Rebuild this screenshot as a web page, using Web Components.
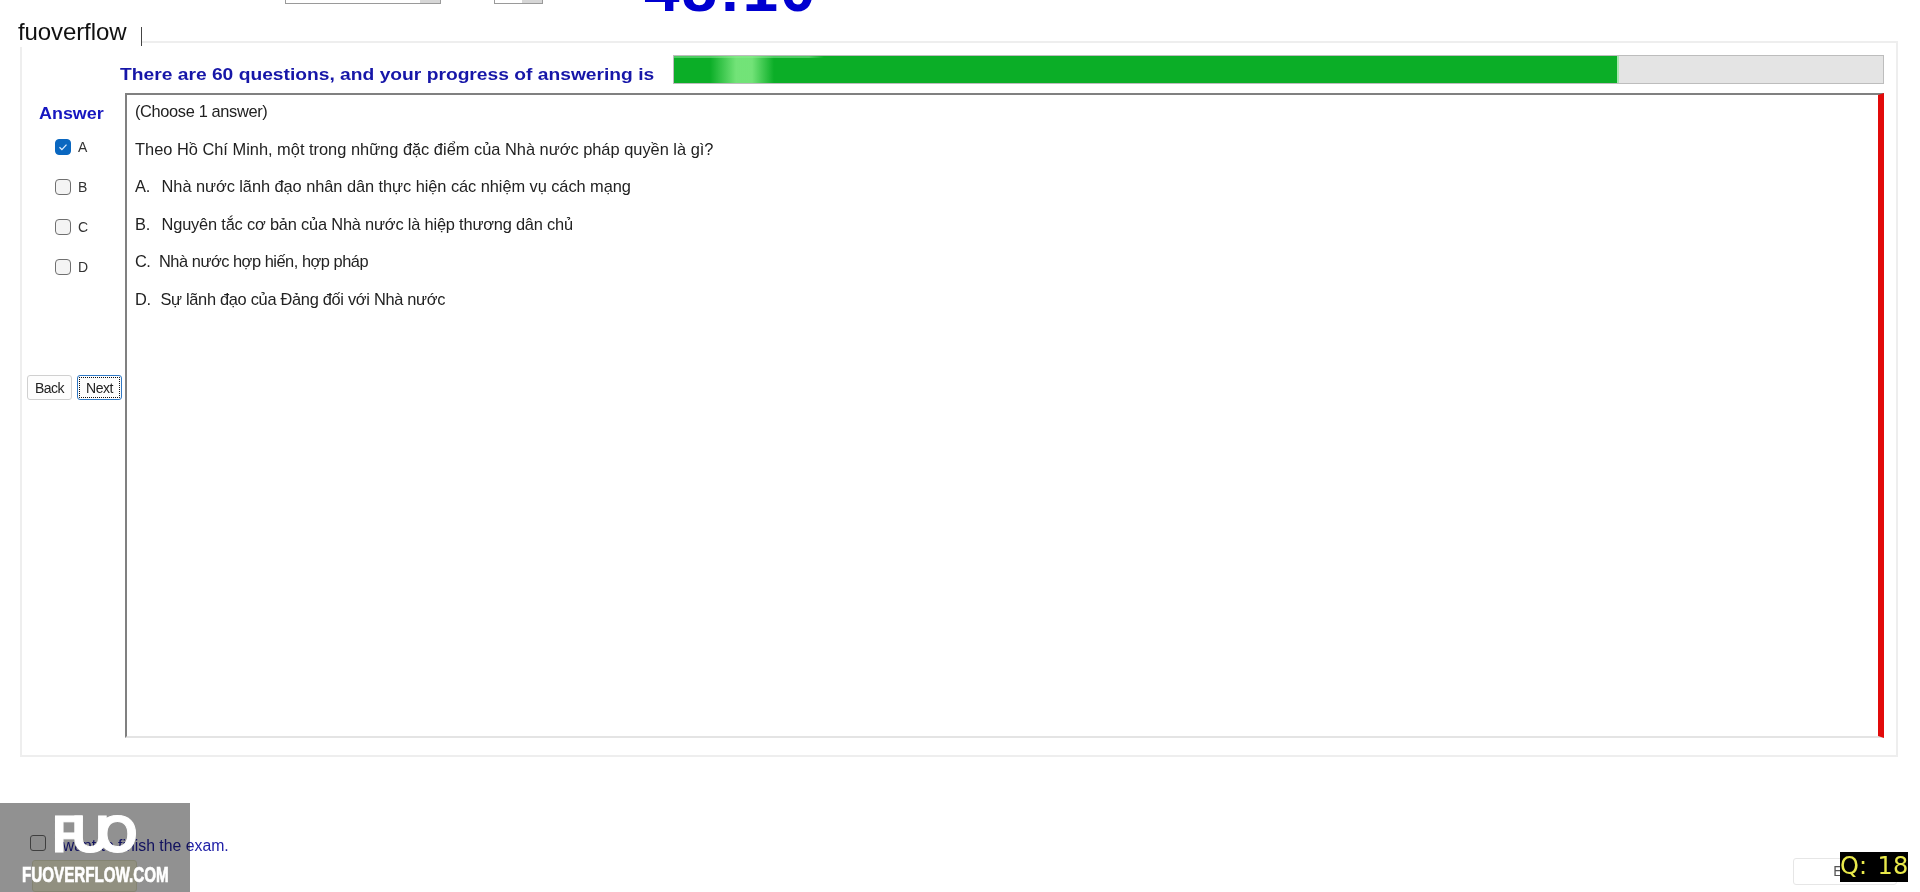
<!DOCTYPE html>
<html>
<head>
<meta charset="utf-8">
<title>Exam</title>
<style>
  html,body{margin:0;padding:0;background:#fff;height:100%;overflow:hidden;}
  body{font-family:"Liberation Sans",Arial,sans-serif;}
</style>
</head>
<body>
<exam-app></exam-app>
<script>
class examApp extends HTMLElement{
  constructor(){
    super();
    this.shadow=this.attachShadow({mode:'open'});
    this.shadow.innerHTML=`
    <style>
      /* the reference is a soft, rescaled capture */
      :host{display:flex;flex-direction:column;position:relative;width:1920px;height:892px;overflow:hidden;filter:blur(.35px);}
    </style>
    <exam-header></exam-header>
    <exam-frame></exam-frame>
    <exam-footer></exam-footer>
    <fuo-label></fuo-label>
    <fuo-watermark></fuo-watermark>
    <q-badge></q-badge>
    `;
  }
}
class examHeader extends HTMLElement{
  constructor(){
    super();
    this.shadow=this.attachShadow({mode:'open'});
    this.shadow.innerHTML=`
    <style>
      :host{display:flex;height:41px;flex:none;padding-left:285px;box-sizing:border-box;overflow:hidden;}
      .spin{height:24px;margin-top:-20px;box-sizing:border-box;border:1px solid #9a9a9a;background:#fff;display:flex;justify-content:flex-end;}
      .spin i{display:block;width:20px;background:#d6d6d6;}
      .a{width:156px;margin-right:53px;}
      .b{width:49px;margin-right:101px;}
      .clock{height:14px;margin-top:-18px;display:flex;align-items:flex-end;font:bold 64px/14px "Liberation Sans",Arial,sans-serif;color:#0000d0;letter-spacing:2px;}
    </style>
    <div class="spin a"><i></i></div>
    <div class="spin b"><i></i></div>
    <div class="clock"><span>48:10</span></div>
    `;
  }
}
class examFrame extends HTMLElement{
  constructor(){
    super();
    this.shadow=this.attachShadow({mode:'open'});
    this.shadow.innerHTML=`
    <style>
      :host{display:flex;flex-direction:column;flex:none;box-sizing:border-box;width:1878px;height:716px;margin-left:20px;border:2px solid #eee;padding:12px 12px 17px 0;}
      .main{display:flex;flex:1;min-height:0;margin-top:9px;}
    </style>
    <exam-progress total="60" percent="78"></exam-progress>
    <div class="main">
      <answer-panel></answer-panel>
      <question-box></question-box>
    </div>
    `;
  }
}
class examProgress extends HTMLElement{
  constructor(){
    super();
    this.shadow=this.attachShadow({mode:'open'});
    const total=this.getAttribute('total');
    const percent=this.getAttribute('percent');
    this.shadow.innerHTML=`
    <style>
      :host{display:flex;align-items:flex-start;height:29px;flex:none;padding-left:98px;}
      .cell{width:553px;flex:none;height:29px;}
      .txt{display:inline-block;font:bold 17px/39px "Liberation Sans",Arial,sans-serif;color:#1616a8;white-space:nowrap;transform:scaleX(1.131);transform-origin:0 0;}
      .bar{flex:1;height:29px;box-sizing:border-box;border:1px solid #bdbdbd;background:#e4e4e4;}
      .fill{height:100%;width:${percent}%;border-right:2px solid #a8e6b0;
        background:
          linear-gradient(90deg,transparent 36px,rgba(140,240,140,.8) 62px,rgba(140,240,140,.8) 78px,transparent 100px) 0 0/100% 100% no-repeat,
          linear-gradient(90deg,rgba(160,240,170,.45) 0,rgba(160,240,170,.45) 135px,transparent 150px) 0 0/100% 2px no-repeat,
          #0bae27;}
    </style>
    <div class="cell"><span class="txt">There are ${total} questions, and your progress of answering is</span></div>
    <div class="bar"><div class="fill"></div></div>
    `;
  }
}
class answerPanel extends HTMLElement{
  constructor(){
    super();
    this.shadow=this.attachShadow({mode:'open'});
    this.shadow.innerHTML=`
    <style>
      :host{display:flex;flex-direction:column;flex:none;width:103px;box-sizing:border-box;padding:11px 0 0 5px;}
      .title{font:bold 16px/20px "Liberation Sans",Arial,sans-serif;color:#1616c0;padding-left:12px;}
      .title span{display:inline-block;transform:scaleX(1.12);transform-origin:0 0;}
      .checks{display:flex;flex-direction:column;gap:24px;margin:15px 0 0 28px;}
      .btns{display:flex;gap:5px;margin-top:100px;}
    </style>
    <div class="title"><span>Answer</span></div>
    <div class="checks">
      <answer-check checked>A</answer-check>
      <answer-check>B</answer-check>
      <answer-check>C</answer-check>
      <answer-check>D</answer-check>
    </div>
    <div class="btns">
      <exam-btn>Back</exam-btn>
      <exam-btn focused>Next</exam-btn>
    </div>
    `;
  }
}
class answerCheck extends HTMLElement{
  constructor(){
    super();
    this.shadow=this.attachShadow({mode:'open'});
    const on=this.hasAttribute('checked');
    this.shadow.innerHTML=`
    <style>
      :host{display:flex;align-items:center;gap:7px;height:16px;font:14px/16px "Liberation Sans",Arial,sans-serif;color:#333;}
      .box{width:16px;height:16px;box-sizing:border-box;border-radius:4px;border:1px solid #707070;background:#f4f4f4;}
      .on{background:#0a67c0;border-color:#0a67c0;}
      svg{display:block;}
    </style>
    <div class="box ${on?'on':''}">${on?'<svg width="14" height="14" viewBox="0 0 14 14"><path d="M3.5 7.2l2.4 2.4 4.6-5" fill="none" stroke="#dcecff" stroke-width="1.3"/></svg>':''}</div>
    <slot></slot>
    `;
  }
}
class examBtn extends HTMLElement{
  constructor(){
    super();
    this.shadow=this.attachShadow({mode:'open'});
    const focused=this.hasAttribute('focused');
    this.shadow.innerHTML=`
    <style>
      :host{display:block;}
      button{display:block;width:45px;height:25px;padding:0;box-sizing:border-box;border-radius:3px;background:#fdfdfd;color:#222;font:14px/1 "Liberation Sans",Arial,sans-serif;letter-spacing:-.5px;
        border:1px solid ${focused?'#2f78c4':'#d0d0d0'};}
      .f{outline:1px dotted #111;outline-offset:-3px;}
    </style>
    <button class="${focused?'f':''}"><slot></slot></button>
    `;
  }
}
class questionBox extends HTMLElement{
  constructor(){
    super();
    this.shadow=this.attachShadow({mode:'open'});
    this.shadow.innerHTML=`
    <style>
      :host{display:block;flex:1;position:relative;box-sizing:border-box;border-top:2px solid #808080;border-left:2px solid #808080;border-bottom:2px solid #e4e4e4;border-right:6px solid #e20a0a;
        padding:6px 0 0 8px;font:16.4px/20px "Liberation Sans",Arial,sans-serif;color:#222;}
      p{margin:0 0 17.6px;white-space:nowrap;}
      b{display:inline-block;font-weight:normal;}
    </style>
    <p style="letter-spacing:-.36px">(Choose 1 answer)</p>
    <p>Theo Hồ Chí Minh, một trong những đặc điểm của Nhà nước pháp quyền là gì?</p>
    <p style="letter-spacing:-.06px"><b style="width:26.6px">A.</b>Nhà nước lãnh đạo nhân dân thực hiện các nhiệm vụ cách mạng</p>
    <p style="letter-spacing:-.19px"><b style="width:26.6px">B.</b>Nguyên tắc cơ bản của Nhà nước là hiệp thương dân chủ</p>
    <p style="letter-spacing:-.47px"><b style="width:24px">C.</b>Nhà nước hợp hiến, hợp pháp</p>
    <p style="letter-spacing:-.3px"><b style="width:25.4px">D.</b>Sự lãnh đạo của Đảng đối với Nhà nước</p>
    `;
  }
}
class examFooter extends HTMLElement{
  constructor(){
    super();
    this.shadow=this.attachShadow({mode:'open'});
    this.shadow.innerHTML=`
    <style>
      :host{display:flex;justify-content:space-between;flex:1;box-sizing:border-box;padding:78px 23px 0 30px;}
      .left{display:flex;flex-direction:column;}
      .finish{display:flex;align-items:center;gap:8px;height:16px;font:15.8px/16px "Liberation Sans",Arial,sans-serif;color:#2222a8;white-space:nowrap;}
      .finish i{display:block;width:16px;height:16px;box-sizing:border-box;border:1px solid #707070;border-radius:3px;background:#f6f6f6;}
      .finish span{position:relative;top:3px;}
      .submit{width:105px;height:32px;margin:9px 0 0 2px;border:1px solid #e8e8c8;border-radius:3px;background:#fffde2;box-sizing:border-box;}
      .exit{width:104px;height:27px;box-sizing:border-box;margin-top:23px;border:1px solid #e6e6e6;border-radius:3px;background:#fff;color:#555;font:14px/25px "Liberation Sans",Arial,sans-serif;text-align:center;}
    </style>
    <div class="left">
      <div class="finish"><i></i><span>I want to finish the exam.</span></div>
      <div class="submit"></div>
    </div>
    <div class="exit">Exit</div>
    `;
  }
}
// overlays burnt into the capture, they sit on top of the form
class fuoLabel extends HTMLElement{
  constructor(){
    super();
    this.shadow=this.attachShadow({mode:'open'});
    this.shadow.innerHTML=`
    <style>
      :host{position:absolute;left:0;top:18px;width:142px;height:29px;background:#fff;}
      span{position:absolute;left:18px;top:1px;font:24px/26px "Liberation Sans",Arial,sans-serif;color:#111;letter-spacing:-.1px;}
      i{position:absolute;right:0;top:9px;width:1px;height:19px;background:#444;}
    </style>
    <span>fuoverflow</span><i></i>
    `;
  }
}
class fuoWatermark extends HTMLElement{
  constructor(){
    super();
    this.shadow=this.attachShadow({mode:'open'});
    this.shadow.innerHTML=`
    <style>
      :host{position:absolute;left:0;top:803px;width:190px;height:89px;background:rgba(0,0,0,.43);display:flex;flex-direction:column;color:#fff;overflow:hidden;}
      .logo{margin:8px 0 0 52px;height:46px;font:bold 52px/46px "Liberation Sans",Arial,sans-serif;letter-spacing:-12px;-webkit-text-stroke:1px #fff;white-space:nowrap;}
      .site{margin-top:6px;align-self:center;font:bold 22px/24px "Liberation Sans",Arial,sans-serif;-webkit-text-stroke:.7px #fff;transform:scaleX(.69);white-space:nowrap;}
    </style>
    <div class="logo">FUO</div>
    <div class="site">FUOVERFLOW.COM</div>
    `;
  }
}
class qBadge extends HTMLElement{
  constructor(){
    super();
    this.shadow=this.attachShadow({mode:'open'});
    this.shadow.innerHTML=`
    <style>
      :host{position:absolute;left:1840px;top:852px;width:68px;height:30px;overflow:hidden;background:#000;color:#e9e94a;font:24px/29px "DejaVu Sans",sans-serif;word-spacing:3px;white-space:nowrap;}
    </style>
    Q: 18
    `;
  }
}
customElements.define('fuo-label',fuoLabel);
customElements.define('fuo-watermark',fuoWatermark);
customElements.define('q-badge',qBadge);
customElements.define('exam-btn',examBtn);
customElements.define('answer-check',answerCheck);
customElements.define('answer-panel',answerPanel);
customElements.define('question-box',questionBox);
customElements.define('exam-progress',examProgress);
customElements.define('exam-header',examHeader);
customElements.define('exam-frame',examFrame);
customElements.define('exam-footer',examFooter);
customElements.define('exam-app',examApp);
</script>
</body>
</html>
